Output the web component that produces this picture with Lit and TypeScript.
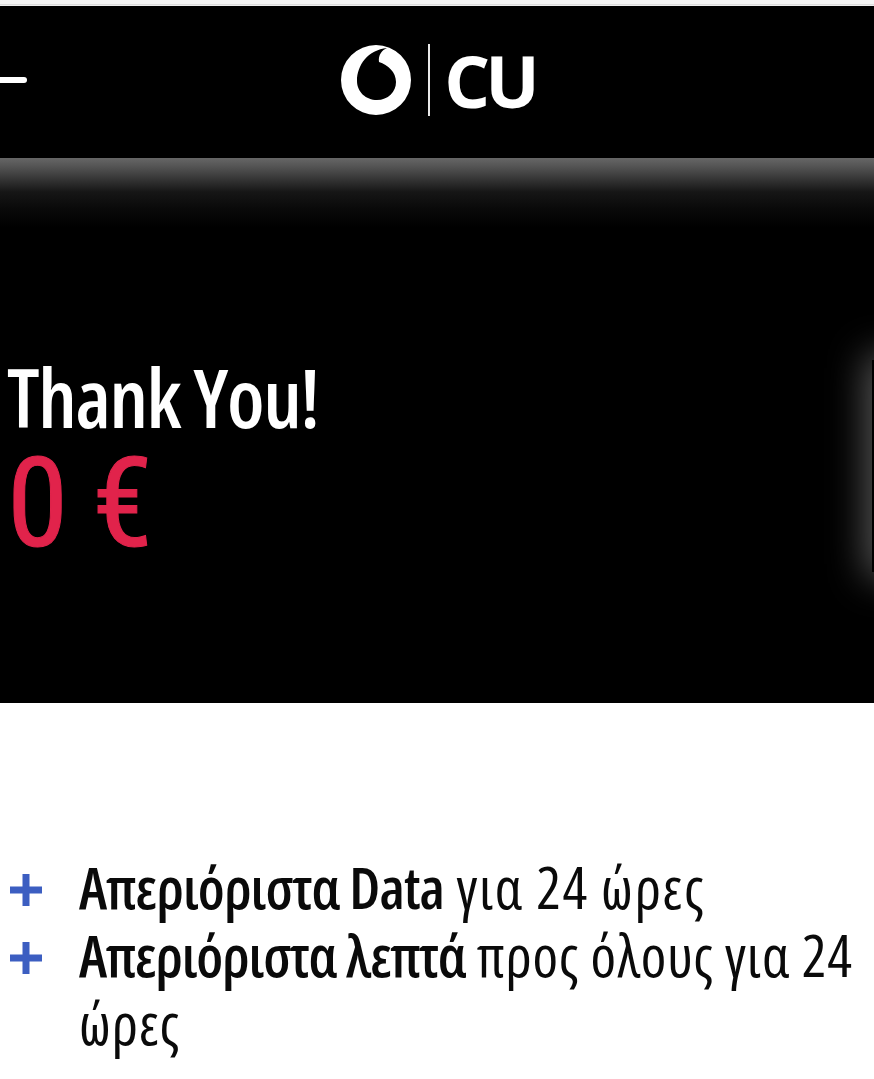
import { LitElement, html, css, svg } from "lit";
import { customElement } from "lit/decorators.js";

@customElement("app-root")
export class AppRoot extends LitElement {
  static styles = css`
    :host { display: block; width: 874px; height: 1079px; overflow: hidden; background: #fff;
      font-family: "Open Sans", "Liberation Sans", sans-serif; font-stretch: 75%; color: #0a0a0a; }
    .top { height: 6px; background: linear-gradient(#f4f4f4 0 4px, #dcdcdc 4px 5px, #efefef 5px); }
    .header { height: 152px; background: #000; display: grid; grid-template-columns: 1fr auto 1fr; align-items: center; }
    .menu { width: 27px; height: 6px; margin-top: -4px; background: #fff; border-radius: 0 3px 3px 0; }
    .logo { display: flex; align-items: center; margin-left: 2px; margin-top: -4px; color: #fff; }
    .logo svg { display: block; width: 70px; height: 70px; }
    .sep { width: 2px; height: 72px; background: #e8e8e8; margin: 0 14px 0 17px; }
    .cu { font-size: 72px; line-height: 72px; font-weight: 700; font-stretch: 100%; letter-spacing: -5px; }
    .hero { position: relative; height: 545px; background: linear-gradient(#666 0, #555 8px, #333 22px, #161616 34px, #0a0a0a 50px, #000 70px);
      padding: 195px 0 0 7px; box-sizing: border-box; overflow: hidden; }
    .title { font-size: 81px; line-height: 88px; color: #fff; font-weight: 600; letter-spacing: -1.4px; }
    .price { font-family: Roboto, "Open Sans", sans-serif; font-size: 124px; line-height: 120px; margin-top: 3px; color: #e1234b; font-weight: 400; font-stretch: 75%; word-spacing: -5px; -webkit-text-stroke: 1px #e1234b; }
    .peek { position: absolute; left: 872px; top: 202px; width: 40px; height: 212px; background: #000; box-shadow: 0 0 38px 5px rgba(255,255,255,.36); }
    ul { list-style: none; margin: 0; padding: 150px 0 0 9px; }
    li { display: grid; grid-template-columns: 70px 1fr; font-size: 58px; line-height: 68px; font-weight: 400; letter-spacing: 1.6px; }
    li.second { letter-spacing: 0.8px; }
    li svg { display: block; width: 34px; height: 34px; margin-top: 20px; }
    b { font-weight: 600; letter-spacing: -0.9px; }
    li.second b { letter-spacing: -1.2px; }
  `;

  private plus() {
    return html`<svg viewBox="0 0 34 34"><path d="M1 13.5h32v7H1zM13.5 1h7v32h-7z" fill="#3c5ec1"/></svg>`;
  }

  render() {
    return html`
      <div class="top"></div>
      <header class="header">
        <div class="menu"></div>
        <div class="logo">
          <svg viewBox="0 0 70 70">
            ${svg`<path fill="#fff" fill-rule="evenodd" d="M35 0a35 35 0 1 0 0 70a35 35 0 1 0 0-70zM46 3C27 5 16 20 16 36C16 47 25 55 36 55C47 55 55 47 55 37C55 27 47 20 38 17C37 10 41 5 46 3z"/>`}
          </svg>
          <div class="sep"></div>
          <div class="cu">CU</div>
        </div>
        <div></div>
      </header>
      <section class="hero">
        <div class="title">Thank You!</div>
        <div class="price">0 €</div>
        <div class="peek"></div>
      </section>
      <ul>
        <li>${this.plus()}<span><b>Απεριόριστα Data</b> για 24 ώρες</span></li>
        <li class="second">${this.plus()}<span><b>Απεριόριστα λεπτά</b> προς όλους για 24 ώρες</span></li>
      </ul>
    `;
  }
}
